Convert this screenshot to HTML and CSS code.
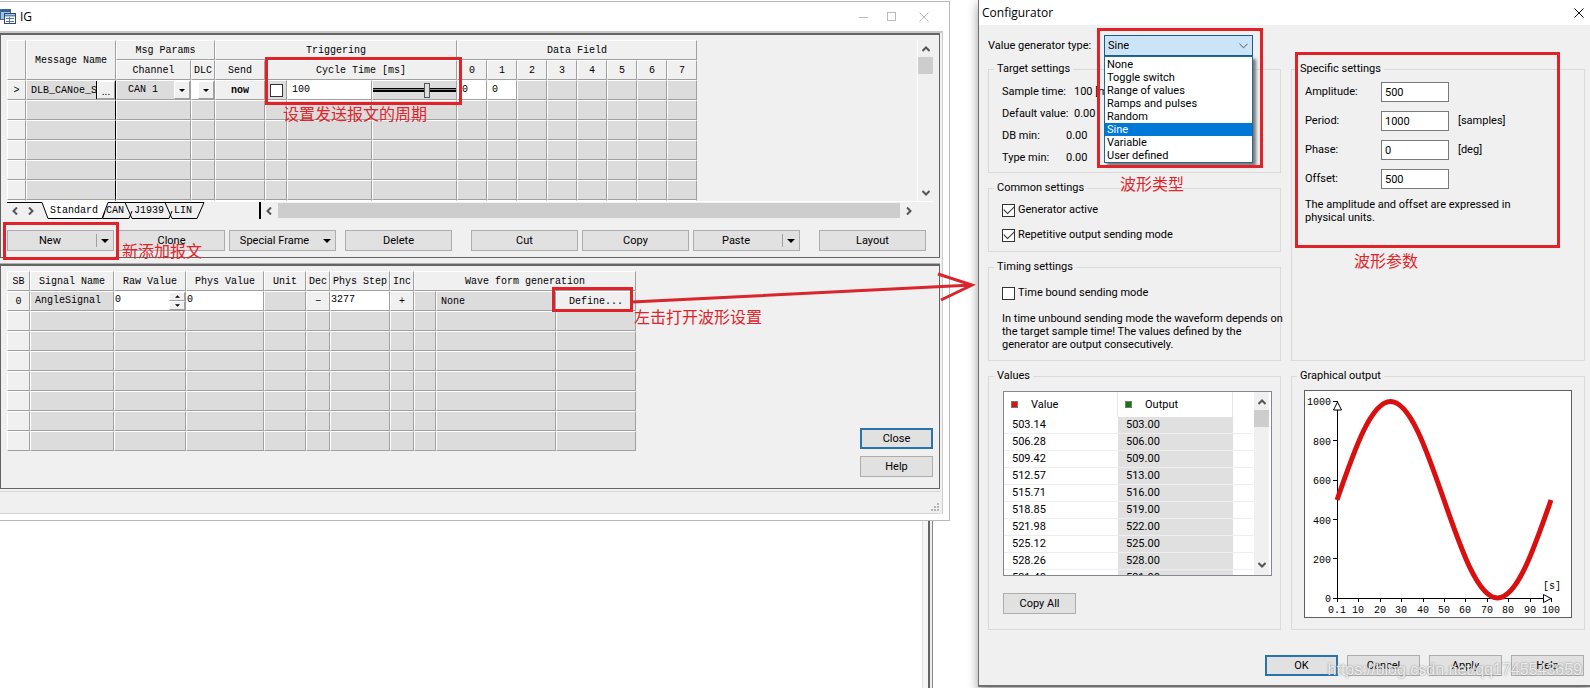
FILE: index.html
```html
<!DOCTYPE html>
<html lang="en">
<head>
<meta charset="utf-8">
<title>IG - Configurator</title>
<link rel="stylesheet" href="styles.css">
</head>
<body>
<svg class="defs" aria-hidden="true">
  <symbol id="left" viewBox="0 0 8 8"><path d="M6 0.5 2.5 4 6 7.5" fill="none" stroke="#555" stroke-width="2"/></symbol>
  <symbol id="right" viewBox="0 0 8 8"><path d="M2 0.5 5.5 4 2 7.5" fill="none" stroke="#555" stroke-width="2"/></symbol>
  <symbol id="up" viewBox="0 0 8 8"><path d="M0.5 6 4 2.5 7.5 6" fill="none" stroke="#555" stroke-width="2"/></symbol>
  <symbol id="down" viewBox="0 0 8 8"><path d="M0.5 2 4 5.5 7.5 2" fill="none" stroke="#555" stroke-width="2"/></symbol>
  <symbol id="caret" viewBox="0 0 8 4"><path d="M0 0h8L4 4z" fill="#000"/></symbol>
</svg>
<main class="desktop">
  <div class="back-edge"></div>

  <section class="ig">
    <header class="ig-title">
      <svg class="app-icon" viewBox="0 0 16 16">
        <rect x="0.5" y="0.5" width="10" height="10" fill="#9cc3ea" stroke="#44688f"/>
        <path d="M1 2h9" stroke="#2f5f96" stroke-width="2"/>
        <rect x="4.500" y="4.500" width="11" height="10" fill="#fff" stroke="#2d4a68"/>
        <path d="M5 6.500h10" stroke="#5b85b4" stroke-width="2"/>
        <path d="M6 9.500h8M6 12.500h8M9.500 8v6" stroke="#55789c"/>
      </svg>
      <h1>IG</h1>
      <div class="win-controls">
        <button aria-label="Minimize"><svg viewBox="0 0 10 10"><path d="M0 5.500h9" stroke="#bbb"/></svg></button>
        <button aria-label="Maximize"><svg viewBox="0 0 10 10"><rect x="0.5" y="0.5" width="8" height="8" fill="none" stroke="#bbb"/></svg></button>
        <button class="close" aria-label="Close window"><svg viewBox="0 0 10 10"><path d="M0.500 0.500 9.500 9.500M9.500 0.500 0.500 9.500" stroke="#bbb"/></svg></button>
      </div>
    </header>

    <div class="frame">
      <div class="panel">
        <div class="grid-view">
          <div class="grid-clip">
            <table class="grid messages">
              <colgroup><col class="w19"><col class="w90"><col class="w75"><col class="w24"><col class="w50"><col class="w22"><col class="w85"><col class="w85"><col class="w30"><col class="w30"><col class="w30"><col class="w30"><col class="w30"><col class="w30"><col class="w30"><col class="w30"></colgroup>
              <thead>
                <tr><th rowspan="2"></th><th rowspan="2">Message Name</th><th colspan="2">Msg Params</th><th colspan="4">Triggering</th><th colspan="8">Data Field</th></tr>
                <tr><th>Channel</th><th>DLC</th><th>Send</th><th colspan="3">Cycle Time [ms]</th><th>0</th><th>1</th><th>2</th><th>3</th><th>4</th><th>5</th><th>6</th><th>7</th></tr>
              </thead>
              <tbody>
                <tr>
                  <th>&gt;</th>
                  <td class="fixed"><div class="cell"><input class="name" aria-label="Message name" value="DLB_CANoe_S"><button class="mini ellipsis">...</button></div></td>
                  <td><div class="cell"><span class="channel">CAN 1</span><button class="mini drop" aria-label="Channel list"><svg class="caret"><use href="#caret"/></svg></button></div></td>
                  <td class="white"><div class="cell end"><button class="mini drop" aria-label="DLC list"><svg class="caret"><use href="#caret"/></svg></button></div></td>
                  <td class="face"><button class="plain now">now</button></td>
                  <td><div class="cell center"><input type="checkbox" aria-label="Cycle active"></div></td>
                  <td class="white"><input class="cycle" aria-label="Cycle time" value="100"></td>
                  <td><div class="cell"><input type="range" aria-label="Cycle time slider" min="0" max="100" value="66"></div></td>
                  <td class="white"><input class="data" aria-label="Data 0" value="0"></td>
                  <td class="white"><input class="data" aria-label="Data 1" value="0"></td>
                  <td></td><td></td><td></td><td></td><td></td><td></td>
                </tr>
                <tr><th></th><td class="fixed"></td><td></td><td></td><td></td><td></td><td></td><td></td><td></td><td></td><td></td><td></td><td></td><td></td><td></td><td></td></tr>
                <tr><th></th><td class="fixed"></td><td></td><td></td><td></td><td></td><td></td><td></td><td></td><td></td><td></td><td></td><td></td><td></td><td></td><td></td></tr>
                <tr><th></th><td class="fixed"></td><td></td><td></td><td></td><td></td><td></td><td></td><td></td><td></td><td></td><td></td><td></td><td></td><td></td><td></td></tr>
                <tr><th></th><td class="fixed"></td><td></td><td></td><td></td><td></td><td></td><td></td><td></td><td></td><td></td><td></td><td></td><td></td><td></td><td></td></tr>
                <tr><th></th><td class="fixed"></td><td></td><td></td><td></td><td></td><td></td><td></td><td></td><td></td><td></td><td></td><td></td><td></td><td></td><td></td></tr>
                <tr><th></th><td class="fixed"></td><td></td><td></td><td></td><td></td><td></td><td></td><td></td><td></td><td></td><td></td><td></td><td></td><td></td><td></td></tr>
              </tbody>
            </table>
          </div>
          <div class="vscroll"><svg class="arrow"><use href="#up"/></svg><div class="thumb"></div><svg class="arrow last"><use href="#down"/></svg></div>
        </div>
        <div class="tab-row">
          <nav class="tabs">
            <svg class="tab-lines" viewBox="0 0 200 18">
              <path d="M35 0.500 41 16.500H95L101 0.500" fill="#fff"/>
              <path d="M0 0.500H35L41 16.500H95L101 0.500H197L190 16.500H165L158 0.500M98 9.500 95.500 16.500H122L125 9M118 0.500 125 16.500H162L165 9" fill="none" stroke="#000"/>
            </svg>
            <button aria-label="Previous tab"><svg class="arrow"><use href="#left"/></svg></button>
            <button aria-label="Next tab"><svg class="arrow"><use href="#right"/></svg></button>
            <button class="tab standard">Standard</button><button class="tab can">CAN</button><button class="tab j1939">J1939</button><button class="tab">LIN</button>
          </nav>
          <div class="hscroll"><svg class="arrow"><use href="#left"/></svg><div class="bar"></div><svg class="arrow"><use href="#right"/></svg></div>
        </div>
        <div class="commands">
          <button class="btn split"><span>New</span><i></i><svg class="caret"><use href="#caret"/></svg></button>
          <button class="btn">Clone</button>
          <button class="btn menu"><span>Special Frame</span><svg class="caret"><use href="#caret"/></svg></button>
          <button class="btn apart">Delete</button>
          <button class="btn far">Cut</button>
          <button class="btn">Copy</button>
          <button class="btn split"><span>Paste</span><i></i><svg class="caret"><use href="#caret"/></svg></button>
          <button class="btn far">Layout</button>
        </div>
        <div class="ring ring-cycle"></div><p class="note note-cycle">设置发送报文的周期</p>
        <div class="ring ring-new"></div><p class="note note-new">新添加报文</p>
      </div>

      <div class="panel signals-panel">
        <table class="grid signals">
          <colgroup><col class="w23"><col class="w84"><col class="w72"><col class="w78"><col class="w42"><col class="w24"><col class="w60"><col class="w24"><col class="w22"><col class="w120"><col class="w80"></colgroup>
          <thead><tr><th>SB</th><th>Signal Name</th><th>Raw Value</th><th>Phys Value</th><th>Unit</th><th>Dec</th><th>Phys Step</th><th>Inc</th><th colspan="3">Wave form generation</th></tr></thead>
          <tbody>
            <tr>
              <th>0</th><td class="signal">AngleSignal</td>
              <td class="white"><div class="cell"><input class="raw" aria-label="Raw value" value="0"><div class="spin"><button aria-label="Increase"><svg class="caret flip"><use href="#caret"/></svg></button><button aria-label="Decrease"><svg class="caret"><use href="#caret"/></svg></button></div></div></td>
              <td class="white"><input class="raw" aria-label="Phys value" value="0"></td><td></td>
              <td class="face"><button class="plain">−</button></td>
              <td class="white"><input class="raw" aria-label="Phys step" value="3277"></td>
              <td class="face"><button class="plain">+</button></td>
              <td></td><td class="wave">None</td><td class="face"><button class="plain">Define...</button></td>
            </tr>
            <tr><th></th><td></td><td></td><td></td><td></td><td></td><td></td><td></td><td></td><td></td><td></td></tr>
            <tr><th></th><td></td><td></td><td></td><td></td><td></td><td></td><td></td><td></td><td></td><td></td></tr>
            <tr><th></th><td></td><td></td><td></td><td></td><td></td><td></td><td></td><td></td><td></td><td></td></tr>
            <tr><th></th><td></td><td></td><td></td><td></td><td></td><td></td><td></td><td></td><td></td><td></td></tr>
            <tr><th></th><td></td><td></td><td></td><td></td><td></td><td></td><td></td><td></td><td></td><td></td></tr>
            <tr><th></th><td></td><td></td><td></td><td></td><td></td><td></td><td></td><td></td><td></td><td></td></tr>
            <tr><th></th><td></td><td></td><td></td><td></td><td></td><td></td><td></td><td></td><td></td><td></td></tr>
          </tbody>
        </table>
        <div class="side"><button class="btn default">Close</button><button class="btn">Help</button></div>
        <div class="ring ring-define"></div><p class="note note-define">左击打开波形设置</p>
        <svg class="pointer" viewBox="0 0 346 34"><path d="M0 31 340 14M306 3 340 14 309 29" fill="none" stroke="#d9252b" stroke-width="3"/></svg>
      </div>

      <footer class="status">
        <svg class="grip" viewBox="0 0 10 10"><path d="M7 1h2M4 4h2M7 4h2M1 7h2M4 7h2M7 7h2" stroke="#b5b5b5" stroke-width="2"/></svg>
      </footer>
    </div>
  </section>

  <section class="config">
    <header class="config-title"><h2>Configurator</h2><button aria-label="Close configurator"><svg viewBox="0 0 10 10"><path d="M0.500 0.500 9.500 9.500M9.500 0.500 0.500 9.500" stroke="#111"/></svg></button></header>
    <div class="config-body">
      <div class="type-row">
        <label for="type">Value generator type:</label>
        <div class="combo">
          <select id="type"><option>None</option><option>Toggle switch</option><option>Range of values</option><option>Ramps and pulses</option><option>Random</option><option selected>Sine</option><option>Variable</option><option>User defined</option></select>
          <svg class="chevron" viewBox="0 0 10 6"><path d="M0.500 0.500 5 5 9.500 0.500" fill="none" stroke="#444"/></svg>
          <ul class="list" role="listbox" aria-label="Value generator types"><li>None</li><li>Toggle switch</li><li>Range of values</li><li>Ramps and pulses</li><li>Random</li><li class="on">Sine</li><li>Variable</li><li>User defined</li></ul>
          <div class="ring ring-type"></div><p class="note note-type">波形类型</p>
        </div>
      </div>

      <div class="columns">
        <div class="column">
          <fieldset class="target"><legend>Target settings</legend>
            <dl><div><dt>Sample time:</dt><dd>100 [ms]</dd></div><div><dt>Default value:</dt><dd>0.00</dd></div><div class="short"><dt>DB min:</dt><dd>0.00</dd></div><div class="short"><dt>Type min:</dt><dd>0.00</dd></div></dl>
          </fieldset>
          <fieldset class="common"><legend>Common settings</legend>
            <label><input type="checkbox" checked>Generator active</label>
            <label><input type="checkbox" checked>Repetitive output sending mode</label>
          </fieldset>
          <fieldset class="timing"><legend>Timing settings</legend>
            <label><input type="checkbox">Time bound sending mode</label>
            <p>In time unbound sending mode the waveform depends on<br>the target sample time! The values defined by the<br>generator are output consecutively.</p>
          </fieldset>
        </div>
        <div class="column">
          <fieldset class="specific"><legend>Specific settings</legend>
            <div class="param"><label for="amp">Amplitude:</label><input id="amp" value="500"></div>
            <div class="param"><label for="per">Period:</label><input id="per" value="1000"><span>[samples]</span></div>
            <div class="param"><label for="pha">Phase:</label><input id="pha" value="0"><span>[deg]</span></div>
            <div class="param"><label for="off">Offset:</label><input id="off" value="500"></div>
            <p>The amplitude and offset are expressed in<br>physical units.</p>
            <div class="ring ring-params"></div><div class="note note-params">波形参数</div>
          </fieldset>
        </div>
        <fieldset class="values"><legend>Values</legend>
          <div class="value-box">
            <table>
              <colgroup><col class="w114"><col class="w115"><col></colgroup>
              <thead><tr><th><i class="red"></i>Value</th><th><i class="green"></i>Output</th><th></th></tr></thead>
              <tbody>
                <tr><td>503.14</td><td>503.00</td><td></td></tr><tr><td>506.28</td><td>506.00</td><td></td></tr>
                <tr><td>509.42</td><td>509.00</td><td></td></tr><tr><td>512.57</td><td>513.00</td><td></td></tr>
                <tr><td>515.71</td><td>516.00</td><td></td></tr><tr><td>518.85</td><td>519.00</td><td></td></tr>
                <tr><td>521.98</td><td>522.00</td><td></td></tr><tr><td>525.12</td><td>525.00</td><td></td></tr>
                <tr><td>528.26</td><td>528.00</td><td></td></tr><tr><td>531.40</td><td>531.00</td><td></td></tr>
              </tbody>
            </table>
            <div class="vscroll"><svg class="arrow"><use href="#up"/></svg><div class="thumb"></div><svg class="arrow last"><use href="#down"/></svg></div>
          </div>
          <button class="btn">Copy All</button>
        </fieldset>
        <fieldset class="graph"><legend>Graphical output</legend>
          <svg class="plot" viewBox="0 0 266 226">
            <path d="M32.500 10V207.500H247M28 10.500h4M28 49.500h4M28 89.500h4M28 128.500h4M28 167.500h4M28 207.500h4M32.500 207v4M53.500 207v4M75.500 207v4M96.500 207v4M118.500 207v4M139.500 207v4M160.500 207v4M182.500 207v4M203.500 207v4M225.500 207v4M246.500 207v4" fill="none" stroke="#000"/>
            <path d="M32.500 11 36.500 19H28.500ZM246 207.500 238.500 203.500V211.500Z" fill="#fff" stroke="#000"/>
            <path d="M32 109C49.500 58.500 66.100 10.500 85.500 10.500C104.900 10.500 121.500 58.500 139 109C156.500 159.500 173.100 207 192.500 207C211.900 207 228.500 159.500 246 109" fill="none" stroke="#d8100f" stroke-width="5"/>
            <g class="y-labels"><text x="26" y="14">1000</text><text x="26" y="54">800</text><text x="26" y="93">600</text><text x="26" y="133">400</text><text x="26" y="172">200</text><text x="26" y="211">0</text></g>
            <g class="x-labels"><text x="32" y="222">0.1</text><text x="53" y="222">10</text><text x="75" y="222">20</text><text x="96" y="222">30</text><text x="118" y="222">40</text><text x="139" y="222">50</text><text x="160" y="222">60</text><text x="182" y="222">70</text><text x="203" y="222">80</text><text x="225" y="222">90</text><text x="246" y="222">100</text><text x="247" y="198">[s]</text></g>
          </svg>
        </fieldset>
      </div>

      <div class="dialog-buttons"><button class="btn default">OK</button><button class="btn">Cancel</button><button class="btn">Apply</button><button class="btn">Help</button></div>
      <p class="watermark">https://blog.csdn.net/qq1745543659</p>
    </div>
  </section>
</main>
</body>
</html>
```
FILE: styles.css
```css
* { box-sizing: border-box; }
body { margin: 0; background: #fff; color: #000; font: 11px/14px Roboto, "Liberation Sans", sans-serif; }
button, input, select { font: inherit; color: inherit; margin: 0; padding: 0; border: 0; background: none; border-radius: 0; min-width: 0; outline: 0; }
h1, h2, p, ul, dl, dd { margin: 0; padding: 0; font-weight: 400; }
.defs { position: absolute; width: 0; height: 0; }
.arrow { width: 8px; height: 8px; display: block; flex: none; }
.caret { width: 8px; height: 4px; display: block; flex: none; }

.desktop { position: relative; display: grid; grid-template-columns: minmax(0, 950fr) 28px minmax(0, 612fr); align-items: start; min-height: 100vh; overflow: hidden; }
.desktop .config { grid-column: 3; }
.back-edge { position: absolute; left: 922px; top: 521px; bottom: 0; width: 11px; border-left: 1px solid #e0e0e0; border-right: 1px solid #888; background: linear-gradient(to right, #f6f6f6 5px, #666 5px, #666 7px, #eee 7px); }

/* Interactive generator window */
.ig { margin-top: 1px; background: #fff; border: solid #b8b8b8; border-width: 1px 1px 1px 0; padding: 0 6px 6px 0; position: relative; }
.ig-title { display: flex; align-items: center; height: 29px; gap: 4px; }
.ig-title h1 { font: 12px/16px "Open Sans", sans-serif; flex: 1; }
.app-icon { width: 16px; height: 16px; }
.win-controls { display: flex; gap: 18px; padding-right: 14px; }
.win-controls .close { margin-left: 4px; }
.win-controls button, .config-title button { width: 10px; height: 10px; display: block; }
.win-controls svg, .config-title svg { width: 10px; height: 10px; display: block; }
.frame { border-top: 2px solid #c8c8c8; border-right: 1px solid #ccc; padding-right: 2px; background: #f0f0f0; }
.panel { position: relative; border: 1px solid #646464; border-top-width: 2px; padding: 5px 6px 6px 6px; }

.grid-view { display: flex; height: 162px; border-bottom: 1px solid #fff; }
.grid-clip { flex: 1; overflow: hidden; min-width: 0; }
.grid { table-layout: fixed; border-collapse: separate; border-spacing: 0; font: 10px/14px "Liberation Mono", monospace; flex: none; align-self: flex-start; }
.messages { width: 690px; }
.signals { width: 629px; }
.grid tr { height: 20px; }
.grid th, .grid td { padding: 0; height: 20px; font-weight: 400; border: 1px solid; border-color: #fff #a0a0a0 #a0a0a0 #fff; white-space: nowrap; }
.grid th { background: #f0f0f0; text-align: center; padding-top: 2px; }
.grid td { background: #dcdcdc; }
.grid .fixed { border-right-color: #000; }
.grid .white { background: #fff; }
.grid .face { background: #f0f0f0; text-align: center; }
.grid .signal { padding-left: 4px; }
.grid .wave { padding: 2px 0 0 4px; }
.w19 { width: 19px; } .w22 { width: 22px; } .w23 { width: 23px; } .w24 { width: 24px; } .w30 { width: 30px; }
.w42 { width: 42px; } .w50 { width: 50px; } .w60 { width: 60px; } .w72 { width: 72px; } .w75 { width: 75px; }
.w78 { width: 78px; } .w80 { width: 80px; } .w84 { width: 84px; } .w85 { width: 85px; } .w90 { width: 90px; }
.w114 { width: 114px; } .w115 { width: 115px; } .w120 { width: 120px; }
.cell { display: flex; height: 18px; align-items: center; }
.cell.end { justify-content: flex-end; }
.cell.center { justify-content: center; }
.name { flex: 1; height: 18px; padding-left: 4px; border-right: 1px solid #000; }
.mini { height: 18px; width: 16px; background: #f0f0f0; border: 1px solid; border-color: #fff #a0a0a0 #a0a0a0 #fff; display: flex; align-items: center; justify-content: center; flex: none; }
.mini .caret { width: 6px; height: 3px; }
.mini.ellipsis { width: 18px; padding-top: 4px; font: 11px/12px Roboto, sans-serif; }
.channel { flex: 1; padding-left: 11px; }
.plain { display: block; width: 100%; height: 18px; padding-top: 2px; text-align: center; }
.now { font-weight: 700; }
.cycle, .data, .raw { display: block; width: 100%; height: 18px; padding: 0 0 2px 4px; }
.raw { padding: 0 0 4px; flex: 1; }
.spin { width: 16px; height: 18px; display: flex; flex-direction: column; flex: none; }
.spin button { flex: 1; display: flex; align-items: center; justify-content: center; background: #f0f0f0; border: 1px solid; border-color: #fff #a0a0a0 #a0a0a0 #fff; }
.spin .caret { width: 5px; height: 3px; }
.flip { transform: rotate(180deg); }

input[type="checkbox"] { appearance: none; width: 13px; height: 13px; border: 1px solid #333; background: #fff; flex: none; display: grid; place-items: center; }
input[type="checkbox"]:checked::after { content: ""; width: 9px; height: 5px; border: solid #333; border-width: 0 0 1px 1px; transform: rotate(-45deg) translate(1px, -1px); }
input[type="range"] { appearance: none; width: 100%; height: 18px; }
input[type="range"]::-webkit-slider-runnable-track { height: 4px; border: solid #000; border-width: 1px 0 2px; background: #888; }
input[type="range"]::-webkit-slider-thumb { appearance: none; width: 6px; height: 15px; margin-top: -6px; border: 1px solid #555; background: #ddd; }

.vscroll { width: 16px; display: flex; flex-direction: column; align-items: center; padding: 5px 0 4px; border-left: 1px solid #fff; flex: none; background: #f0f0f0; }
.vscroll .thumb { width: 15px; height: 17px; margin-top: 4px; background: #cdcdcd; }
.vscroll .last { margin-top: auto; }

.tab-row { display: flex; height: 17px; padding-right: 16px; }
.tabs { position: relative; width: 254px; border-right: 2px solid #000; display: flex; align-items: center; font: 10px/14px "Liberation Mono", monospace; flex: none; }
.tab-lines { position: absolute; inset: 0 auto auto 0; width: 200px; height: 18px; }
.tabs button { position: relative; width: 16px; height: 16px; display: flex; align-items: center; justify-content: center; flex: none; }
.tabs .tab { width: auto; margin-left: 10px; }
.tabs .standard { margin-left: 11px; }
.tabs .can { margin-left: 8px; }
.hscroll { flex: 1; display: flex; align-items: center; gap: 5px; padding: 0 4px; }
.hscroll .bar { flex: 1; height: 15px; background: #cdcdcd; }

.btn { height: 21px; background: #e1e1e1; border: 1px solid #adadad; display: flex; align-items: center; justify-content: center; text-align: center; }
.btn.default { border: 2px solid #2a74ae; }
.commands { display: flex; gap: 4px; margin-top: 11px; padding-right: 7px; }
.commands .btn { flex: 1 1 60px; }
.commands .apart { margin-left: 5px; }
.commands .far { margin-left: 15px; }
.commands .split, .commands .menu { padding-right: 4px; gap: 4px; }
.split span, .menu span { flex: 1; }
.split i { width: 1px; height: 13px; background: #a0a0a0; }

.signals-panel { margin-top: 6px; display: flex; justify-content: space-between; min-height: 225px; padding-bottom: 11px; box-shadow: 0 -1px #b0b0b0; }
.side { display: flex; flex-direction: column; justify-content: flex-end; gap: 7px; width: 73px; }
.status { margin-top: 2px; height: 23px; border: solid #d5d5d5; border-width: 1px 0; display: flex; justify-content: flex-end; align-items: flex-end; }
.grip { width: 10px; height: 10px; }

/* Annotations drawn over the windows */
.ring { position: absolute; border: 3px solid #e02229; pointer-events: none; z-index: 3; }
.note { position: absolute; color: #e0242b; font: 16px/20px "Noto Sans CJK SC", sans-serif; white-space: nowrap; z-index: 3; }
.ring-cycle { left: 264px; top: 22px; width: 197px; height: 48px; }
.note-cycle { left: 282px; top: 68px; }
.ring-new { left: 2px; top: 187px; width: 116px; height: 38px; }
.note-new { left: 121px; top: 205px; }
.ring-define { left: 551px; top: 21px; width: 81px; height: 25px; }
.note-define { left: 633px; top: 40px; }
.pointer { position: absolute; left: 631px; top: 5px; width: 346px; height: 34px; z-index: 3; }
.ring-type { left: -7px; top: -7px; width: 166px; height: 140px; }
.note-type { left: 16px; top: 138px; }

/* Configurator dialog */
.config { background: #f0f0f0; border: solid #707070; border-width: 0 0 2px 1px; box-shadow: 0 4px 10px #999; }
.config-title { height: 25px; background: #fff; display: flex; justify-content: space-between; align-items: center; padding: 0 6px 0 3px; }
.config-title h2 { font: 12px/16px "Open Sans", sans-serif; }
.config-body { position: relative; padding: 10px 5px 9px 9px; }
.type-row { display: flex; align-items: center; }
.type-row label { width: 116px; }
.combo { position: relative; width: 149px; z-index: 2; }
.combo select { appearance: none; width: 100%; height: 21px; display: block; background: #cce4f7; border: 1px solid #1b5c8c; padding-left: 3px; }
.chevron { position: absolute; right: 5px; top: 8px; width: 9px; height: 6px; }
.list { position: absolute; left: 0; right: 0; top: 21px; border: 1px solid #1b6a9c; background: #fff; list-style: none; line-height: 13px; padding-top: 1px; box-shadow: 3px 3px 3px #777; }
.list li { padding-left: 2px; }
.list .on { background: #0078d7; color: #fff; }

.columns { display: grid; grid-template-columns: minmax(0, 293fr) minmax(0, 294fr); column-gap: 10px; row-gap: 8px; margin-top: 6px; }
.column { display: flex; flex-direction: column; gap: 8px; }
fieldset { margin: 0; min-width: 0; border: 1px solid #dadada; padding: 0 13px; position: relative; }
legend { margin-left: -8px; padding: 0 3px; line-height: 14px; }
.target { height: 111px; }
.target dl { padding-top: 9px; display: flex; flex-direction: column; gap: 8px; }
.target dl div { display: flex; }
.target dt { width: 72px; }
.target .short dt { width: 64px; }
.common { height: 71px; }
.common label, .timing label { display: flex; align-items: center; gap: 3px; height: 14px; margin-top: 8px; }
.common label + label { margin-top: 11px; }
.timing { min-height: 101px; flex: 1; }
.timing label { margin-top: 12px; }
.timing p, .specific p { line-height: 13px; white-space: nowrap; }
.timing p { margin-top: 12px; }
.specific { flex: 1; padding-top: 6px; }
.param { display: flex; align-items: center; margin-bottom: 9px; }
.param label { width: 76px; }
.param input { width: 68px; height: 20px; background: #fff; border: 1px solid #7a7a7a; padding-left: 3px; }
.param span { margin-left: 9px; }
.ring-params { left: 3px; right: 24px; top: -24px; height: 196px; }
.note-params { left: 62px; top: 174px; }

.values { height: 261px; padding: 8px 8px 0 14px; }
.values legend { margin-left: -9px; }
.value-box { display: flex; height: 185px; border: 1px solid #828790; background: #fff; overflow: hidden; padding-right: 2px; }
.value-box table { flex: 1; table-layout: fixed; border-collapse: separate; border-spacing: 0; align-self: flex-start; min-width: 0; }
.value-box th { height: 25px; text-align: left; font-weight: 400; padding: 1px 0 0 7px; border-right: 1px solid #e5e5e5; }
.value-box td { height: 17px; line-height: 14px; padding: 1px 0 1px 8px; border-bottom: 1px solid #eee; }
.value-box td:nth-child(2) { background: #e0e0e0; padding-left: 8px; }
.value-box th:last-child { border-right: 0; }
.value-box i { display: inline-block; width: 7px; height: 7px; margin-right: 13px; border: 1px solid #777; }
.value-box .red { background: #e01010; }
.value-box .green { background: #107a10; }
.value-box .vscroll { padding: 6px 0; }
.values .btn { width: 73px; margin-top: 17px; }
.graph { padding: 7px 12px 11px; }
.graph legend { margin-left: -7px; }
.plot { display: block; width: 100%; height: auto; background: #fff; border: 1px solid #606060; font: 10px "Liberation Mono", monospace; }
.y-labels { text-anchor: end; }
.x-labels { text-anchor: middle; }
.dialog-buttons { display: flex; justify-content: flex-end; gap: 9px; margin-top: 25px; padding-right: 1px; }
.dialog-buttons .btn { width: 73px; }
.watermark { position: absolute; right: 8px; bottom: 5px; font: 16px/20px "Liberation Sans", sans-serif; color: rgba(255, 255, 255, 0.8); text-shadow: 0 0 2px #777; pointer-events: none; }
```
